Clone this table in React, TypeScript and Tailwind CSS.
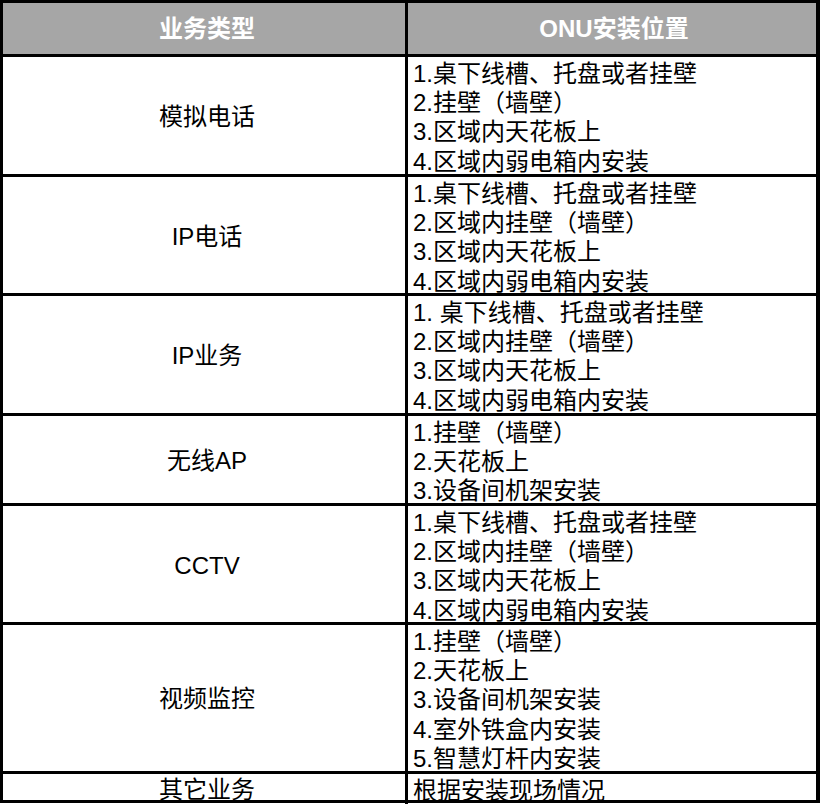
import React from 'react';

const rows: { type: string; items: string[]; h: string }[] = [
  {
    type: '模拟电话',
    h: 'h-[120px]',
    items: ['1.桌下线槽、托盘或者挂壁', '2.挂壁（墙壁）', '3.区域内天花板上', '4.区域内弱电箱内安装'],
  },
  {
    type: 'IP电话',
    h: 'h-[119px]',
    items: ['1.桌下线槽、托盘或者挂壁', '2.区域内挂壁（墙壁）', '3.区域内天花板上', '4.区域内弱电箱内安装'],
  },
  {
    type: 'IP业务',
    h: 'h-[120px]',
    items: ['1. 桌下线槽、托盘或者挂壁', '2.区域内挂壁（墙壁）', '3.区域内天花板上', '4.区域内弱电箱内安装'],
  },
  {
    type: '无线AP',
    h: 'h-[90px]',
    items: ['1.挂壁（墙壁）', '2.天花板上', '3.设备间机架安装'],
  },
  {
    type: 'CCTV',
    h: 'h-[119px]',
    items: ['1.桌下线槽、托盘或者挂壁', '2.区域内挂壁（墙壁）', '3.区域内天花板上', '4.区域内弱电箱内安装'],
  },
  {
    type: '视频监控',
    h: 'h-[149px]',
    items: ['1.挂壁（墙壁）', '2.天花板上', '3.设备间机架安装', '4.室外铁盒内安装', '5.智慧灯杆内安装'],
  },
  {
    type: '其它业务',
    h: 'h-[29px]',
    items: ['根据安装现场情况'],
  },
];

export default function App() {
  return (
    <div
      className="w-[820px] h-[804px] bg-white"
      style={{ fontFamily: '"Liberation Sans", "Noto Sans CJK SC", sans-serif' }}
    >
      <div className="w-[820px] border-[3px] border-r-[4px] border-black text-[24px] text-black">
        {/* Header */}
        <div className="grid grid-cols-[405px_1fr] h-[51px] bg-[#a6a6a6] text-white font-bold">
          <div className="flex items-center justify-center border-r-[3px] border-black pl-[6px]">业务类型</div>
          <div className="flex items-center justify-center pl-[4px]">ONU安装位置</div>
        </div>

        {rows.map((row) => (
          <div key={row.type} className={`grid grid-cols-[405px_1fr] border-t-[3px] border-black ${row.h}`}>
            <div className="flex items-center justify-center border-r-[3px] border-black leading-[29.2px] pl-[6px]">
              {row.type}
            </div>
            <div className="flex flex-col justify-center pl-[5px] pt-[2px] leading-[29.2px] whitespace-pre">
              {row.items.map((it) => (
                <div key={it}>{it}</div>
              ))}
            </div>
          </div>
        ))}
      </div>
    </div>
  );
}
